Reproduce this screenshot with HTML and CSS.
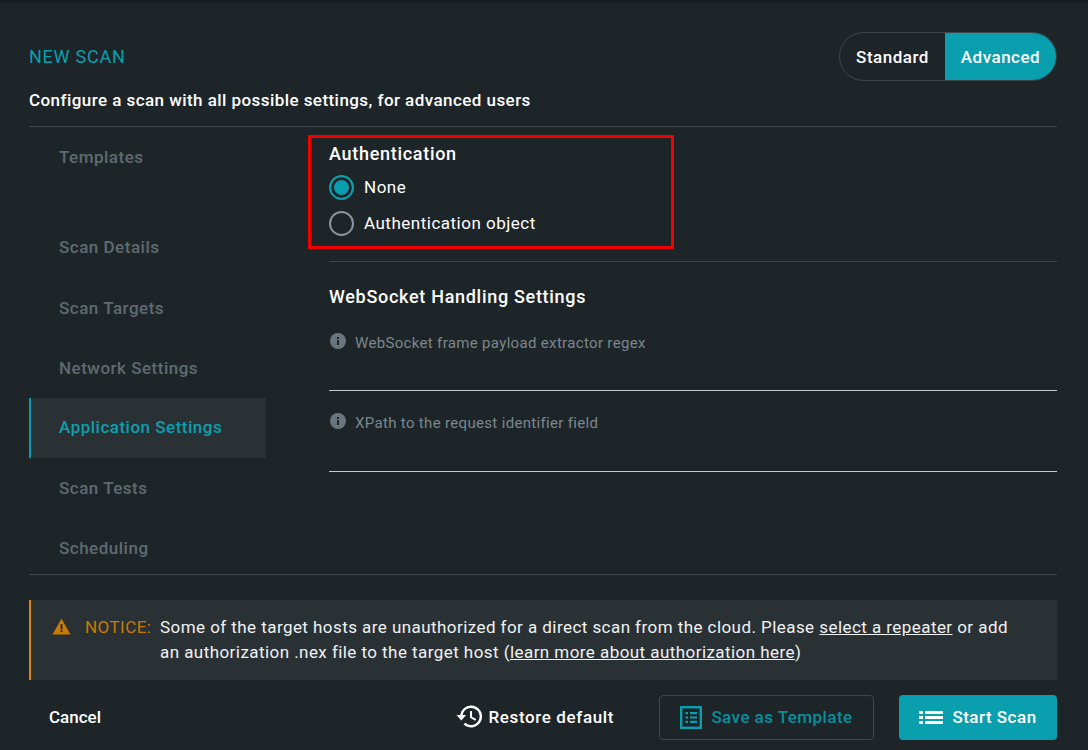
FILE: index.html
```html
<!DOCTYPE html>
<html lang="en">
<head>
    <meta charset="UTF-8">
    <title>New Scan</title>
    <link rel="stylesheet" href="styles.css">
</head>
<body>
    <div class="modal">
        <header class="head">
            <div>
                <h1 class="title">NEW SCAN</h1>
                <p class="subtitle">Configure a scan with all possible settings, for advanced users</p>
            </div>
            <div class="toggle">
                <span class="toggle-item">Standard</span>
                <span class="toggle-item on">Advanced</span>
            </div>
        </header>

        <div class="main">
            <nav class="side">
                <a class="side-item templates">Templates</a>
                <a class="side-item details">Scan Details</a>
                <a class="side-item">Scan Targets</a>
                <a class="side-item">Network Settings</a>
                <a class="side-item active">Application Settings</a>
                <a class="side-item">Scan Tests</a>
                <a class="side-item">Scheduling</a>
            </nav>
            <section class="content">
                <div class="auth">
                    <h2 class="auth-title">Authentication</h2>
                    <label class="radio"><span class="dot checked"></span>None</label>
                    <label class="radio"><span class="dot"></span>Authentication object</label>
                </div>
                <div class="ws">
                    <h2 class="ws-title">WebSocket Handling Settings</h2>
                    <div class="field first">
                        <svg class="info" viewBox="0 0 16 16"><circle cx="8" cy="8" r="8" fill="#68757e"/><rect x="7" y="7" width="2" height="5" fill="#1e2529"/><rect x="7" y="4" width="2" height="2" fill="#1e2529"/></svg>
                        <span>WebSocket frame payload extractor regex</span>
                    </div>
                    <div class="field">
                        <svg class="info" viewBox="0 0 16 16"><circle cx="8" cy="8" r="8" fill="#68757e"/><rect x="7" y="7" width="2" height="5" fill="#1e2529"/><rect x="7" y="4" width="2" height="2" fill="#1e2529"/></svg>
                        <span>XPath to the request identifier field</span>
                    </div>
                </div>
            </section>
        </div>

        <div class="notice">
            <svg class="warn" viewBox="0 0 20 18"><path d="M10 0.5L19.5 17.5H0.5Z" fill="#c87a05"/><rect x="9" y="6.5" width="2" height="5.5" fill="#1e2529"/><rect x="9" y="13" width="2" height="2" fill="#1e2529"/></svg>
            <span class="notice-label">NOTICE:</span>
            <p class="notice-text">Some of the target hosts are unauthorized for a direct scan from the cloud. Please <u>select a repeater</u> or add an authorization .nex file to the target host (<u>learn more about authorization here</u>)</p>
        </div>

        <footer class="foot">
            <a class="cancel">Cancel</a>
            <a class="restore">
                <svg class="icon-restore" viewBox="0 0 27 25"><path d="M15 1.500A11 11 0 0 0 4.100 11H0.500l4.800 5.600L10.100 11H6.700a8.500 8.500 0 1 1 2.600 7.700l-1.800 1.800A11 11 0 1 0 15 1.500z" fill="#fff"/><path d="M14 7v6.800l5.200 3 1-1.700-4.200-2.400V7z" fill="#fff"/></svg>
                Restore default
            </a>
            <a class="btn btn-outline">
                <svg class="icon-tpl" viewBox="0 0 22 23"><rect x="1.200" y="1.200" width="19.600" height="20.600" fill="none" stroke="#0a9fae" stroke-width="2.400"/><path d="M5.500 6h2.500v2.200H5.500zM10 6h7v2.200h-7zM5.500 10.400h2.500v2.200H5.500zM10 10.400h7v2.200h-7zM5.500 14.800h2.500v2.200H5.500zM10 14.800h7v2.200h-7z" fill="#0a9fae"/></svg>
                Save as Template
            </a>
            <a class="btn btn-fill">
                <svg class="icon-list" viewBox="0 0 24 13"><path d="M0 0h4v3H0zM6 0h18v3H6zM0 5h4v3H0zM6 5h18v3H6zM0 10h4v3H0zM6 10h18v3H6z" fill="#fff"/></svg>
                Start Scan
            </a>
        </footer>
    </div>
</body>
</html>
```

FILE: styles.css
```css
* {
    box-sizing: border-box;
}
html, body {
    margin: 0;
    height: 100%;
}
body {
    font-family: "Roboto", "Liberation Sans", sans-serif;
    font-size: 17px;
    letter-spacing: 0.5px;
    background-color: #181d21;
    color: #fff;
    overflow: hidden;
}
.modal {
    margin-top: 2px;
    height: 748px;
    padding: 0 31px 0 29px;
    background-color: #1e2529;
}
.head {
    display: flex;
    justify-content: space-between;
    height: 125px;
    padding-top: 30px;
    border-bottom: 1px solid #41474b;
}
.title {
    margin: 14px 0 0;
    font-size: 18px;
    line-height: 22px;
    font-weight: 400;
    letter-spacing: 0.75px;
    color: #0a9fae;
}
.subtitle {
    margin: 21px 0 0;
    font-size: 17px;
    line-height: 22px;
    font-weight: 500;
    letter-spacing: 0.44px;
}
.toggle {
    display: flex;
    width: 218px;
    height: 49px;
    border: 1px solid #41474b;
    border-radius: 25px;
    overflow: hidden;
    font-weight: 500;
}
.toggle-item {
    flex: 1;
    display: flex;
    align-items: center;
    justify-content: center;
}
.toggle-item.on {
    flex: 0 0 111px;
    background-color: #0a9fae;
}
.main {
    display: flex;
    height: 448px;
    border-bottom: 1px solid #41474b;
}
.side {
    flex: 0 0 237px;
    overflow: hidden;
}
.side-item {
    display: flex;
    align-items: center;
    height: 60px;
    padding-left: 30px;
    font-weight: 500;
    color: #5f6a71;
}
.templates {
    margin-bottom: 30px;
}
.details {
    margin-bottom: 1px;
}
.side-item.active {
    padding: 0 0 2px 28px;
    border-left: 2px solid #0a9fae;
    background-color: #2a3135;
    color: #0a9fae;
}
.content {
    flex: 1;
    padding: 8px 0 0 42px;
}
.auth {
    width: 366px;
    height: 114px;
    padding: 5px 0 0 18px;
    border: 3px solid #f00000;
}
.auth-title {
    margin: 0 0 4px;
    font-size: 18px;
    line-height: 22px;
    font-weight: 500;
    letter-spacing: 0.7px;
}
.radio {
    display: flex;
    align-items: center;
    gap: 10px;
    height: 36px;
}
.dot {
    width: 25px;
    height: 25px;
    border: 2px solid #8a969d;
    border-radius: 50%;
}
.dot.checked {
    border-color: #0a9fae;
    background-color: #0a9fae;
    box-shadow: inset 0 0 0 3px #1e2529;
}
.ws {
    margin: 12px 0 0 21px;
    border-top: 1px solid #41474b;
}
.ws-title {
    margin: 24px 0 0;
    font-size: 18px;
    line-height: 22px;
    font-weight: 500;
    letter-spacing: 0.7px;
}
.field {
    display: flex;
    align-items: flex-start;
    gap: 9px;
    height: 81px;
    padding: 22px 0 0 1px;
    border-bottom: 1px solid #c4c8ca;
    font-size: 15px;
    line-height: 20px;
    letter-spacing: 0.33px;
    color: #7b878e;
}
.field.first {
    margin-top: 14px;
    height: 69px;
    padding-top: 11px;
}
.info {
    width: 16px;
    height: 16px;
}
.notice {
    display: flex;
    align-items: flex-start;
    height: 80px;
    margin-top: 25px;
    padding: 15px 40px 0 21px;
    border-left: 2px solid #d98a09;
    background-color: #2a3135;
    line-height: 25px;
    letter-spacing: 0.44px;
}
.warn {
    flex: none;
    width: 19px;
    height: 17px;
    margin-top: 3px;
}
.notice-label {
    flex: none;
    width: 75px;
    margin-left: 14px;
    color: #c87a05;
}
.notice-text {
    margin: 0;
    color: #f0f1f2;
}
.foot {
    display: flex;
    align-items: center;
    height: 45px;
    margin-top: 15px;
    font-weight: 500;
}
.cancel {
    margin: 0 auto 2px 20px;
    letter-spacing: 0;
}
.restore {
    display: flex;
    align-items: center;
    gap: 6px;
    margin: 0 45px 2px 0;
    letter-spacing: 0.62px;
}
.icon-restore {
    width: 27px;
    height: 25px;
}
.btn {
    display: flex;
    align-items: center;
    justify-content: center;
    gap: 9px;
    height: 45px;
    padding-bottom: 1px;
    border-radius: 4px;
}
.btn-outline {
    width: 215px;
    border: 1px solid #41474b;
    color: #0a8e9c;
    letter-spacing: 0.45px;
}
.btn-fill {
    width: 158px;
    margin-left: 25px;
    background-color: #0a9fae;
}
.icon-tpl {
    width: 22px;
    height: 23px;
}
.icon-list {
    width: 24px;
    height: 13px;
}
```
